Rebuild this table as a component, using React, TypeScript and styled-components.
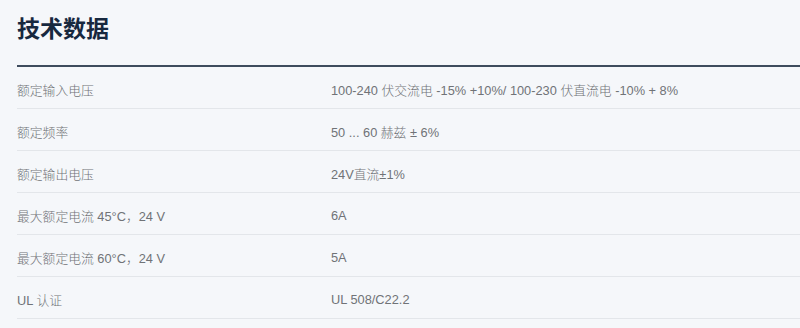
import styled, { createGlobalStyle } from 'styled-components';

const rows: [string, string][] = [
  ['额定输入电压', '100-240 伏交流电 -15% +10%/ 100-230 伏直流电 -10% + 8%'],
  ['额定频率', '50 ... 60 赫兹 ± 6%'],
  ['额定输出电压', '24V直流±1%'],
  ['最大额定电流 45°C，24 V', '6A'],
  ['最大额定电流 60°C，24 V', '5A'],
  ['UL 认证', 'UL 508/C22.2'],
];

export default function App() {
  return (
    <>
      <Global />
      <Section>
        <Title>技术数据</Title>
        <Table>
          {rows.map(([label, value]) => (
            <Row key={label}>
              <Cell>{label}</Cell>
              <Cell>{value}</Cell>
            </Row>
          ))}
        </Table>
      </Section>
    </>
  );
}

const Global = createGlobalStyle`
  html, body {
    margin: 0;
    background: #f5f7fa;
  }
  body {
    font-family: "Liberation Sans", "Noto Sans CJK SC", sans-serif;
  }
`;

const Section = styled.section`
  width: 800px;
  height: 328px;
  padding-left: 17px;
  box-sizing: border-box;
  overflow: hidden;
`;

const Title = styled.h2`
  margin: 0;
  padding: 12px 0 0;
  height: 67px;
  box-sizing: border-box;
  font-family: "Noto Sans CJK SC", sans-serif;
  font-size: 23px;
  line-height: 30px;
  font-weight: 700;
  color: #17283f;
  border-bottom: 2px solid #3e4c5d;
`;

const Table = styled.div`
  display: flex;
  flex-direction: column;
`;

const Row = styled.div`
  display: grid;
  grid-template-columns: 314px 1fr;
  height: 42px;
  align-items: center;
  border-bottom: 1px solid #e3e6ea;
  box-sizing: border-box;
  padding-top: 4px;
`;

const Cell = styled.div`
  font-size: 12.8px;
  font-weight: 300;
  color: #707377;
  white-space: nowrap;
`;
